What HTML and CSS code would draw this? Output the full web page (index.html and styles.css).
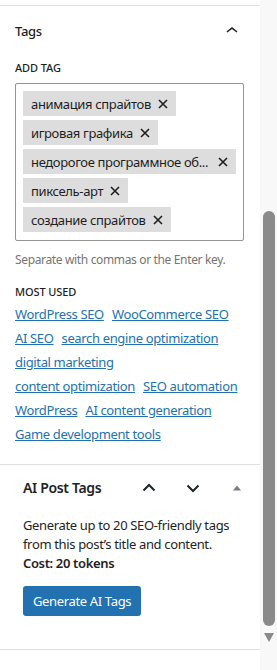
FILE: index.html
```html
<!DOCTYPE html>
<html lang="en">
<head>
    <meta charset="UTF-8">
    <meta name="viewport" content="width=device-width, initial-scale=1.0">
    <title>Tags</title>
    <link rel="stylesheet" href="styles.css">
</head>
<body>
    <div class="sidebar">
        <div class="sidebar-content">
            <div class="prev-panel"></div>

            <div class="panel tags-panel">
                <div class="panel-header">
                    <h2>Tags</h2>
                    <button class="icon-btn" aria-label="Collapse">
                        <svg width="24" height="24" viewBox="0 0 24 24"><path d="M6.5 12.4L12 8l5.5 4.4-.9 1.2L12 10l-4.6 3.6-1-1.2z"/></svg>
                    </button>
                </div>
                <div class="field-label">Add tag</div>
                <div class="token-field">
                    <span class="token"><span class="token-text">анимация спрайтов</span><svg class="token-remove" width="10" height="10" viewBox="0 0 10 10"><path d="M1 1l8 8M9 1l-8 8"/></svg></span>
                    <span class="token"><span class="token-text">игровая графика</span><svg class="token-remove" width="10" height="10" viewBox="0 0 10 10"><path d="M1 1l8 8M9 1l-8 8"/></svg></span>
                    <span class="token token-wide"><span class="token-text">недорогое программное об...</span><svg class="token-remove" width="10" height="10" viewBox="0 0 10 10"><path d="M1 1l8 8M9 1l-8 8"/></svg></span>
                    <span class="token"><span class="token-text">пиксель-арт</span><svg class="token-remove" width="10" height="10" viewBox="0 0 10 10"><path d="M1 1l8 8M9 1l-8 8"/></svg></span>
                    <span class="token"><span class="token-text">создание спрайтов</span><svg class="token-remove" width="10" height="10" viewBox="0 0 10 10"><path d="M1 1l8 8M9 1l-8 8"/></svg></span>
                </div>
                <p class="help">Separate with commas or the Enter key.</p>
                <div class="field-label most-used">Most used</div>
                <ul class="most-used-list">
                    <li><a href="#">WordPress SEO</a></li>
                    <li><a href="#">WooCommerce SEO</a></li>
                    <li><a href="#">AI SEO</a></li>
                    <li><a href="#">search engine optimization</a></li>
                    <li><a href="#">digital marketing</a></li>
                    <li><a href="#">content optimization</a></li>
                    <li><a href="#">SEO automation</a></li>
                    <li><a href="#">WordPress</a></li>
                    <li><a href="#">AI content generation</a></li>
                    <li><a href="#">Game development tools</a></li>
                </ul>
            </div>

            <div class="panel ai-panel">
                <div class="panel-header ai-header">
                    <h2>AI Post Tags</h2>
                    <div class="handle-actions">
                        <button class="icon-btn big" aria-label="Move up">
                            <svg width="20" height="20" viewBox="0 0 20 20"><path d="M4.5 12.5L10 7l5.5 5.5" fill="none" stroke="#1d2327" stroke-width="2"/></svg>
                        </button>
                        <button class="icon-btn big" aria-label="Move down">
                            <svg width="20" height="20" viewBox="0 0 20 20"><path d="M4.5 7.5L10 13l5.5-5.5" fill="none" stroke="#1d2327" stroke-width="2"/></svg>
                        </button>
                        <button class="icon-btn big" aria-label="Toggle panel">
                            <svg width="20" height="20" viewBox="0 0 20 20"><path d="M6 12.5l4-5 4 5z" fill="#787c82"/></svg>
                        </button>
                    </div>
                </div>
                <p class="ai-text">Generate up to 20 SEO-friendly tags from this post’s title and content.</p>
                <p class="ai-cost">Cost: 20 tokens</p>
                <button class="primary-btn">Generate AI Tags</button>
            </div>
        </div>

        <div class="scrollbar">
            <div class="scroll-track">
                <div class="scroll-thumb"></div>
            </div>
            <div class="scroll-arrow"></div>
            <div class="scroll-rest"></div>
        </div>
    </div>
</body>
</html>
```

FILE: styles.css
```css
* {
    margin: 0;
    padding: 0;
    box-sizing: border-box;
    font-family: 'Noto Sans', 'Open Sans', sans-serif;
    letter-spacing: -0.35px;
}

body {
    background: #fff;
    color: #1e1e1e;
    width: 277px;
    height: 670px;
    overflow: hidden;
}

.sidebar {
    display: flex;
    height: 670px;
}

.sidebar-content {
    width: 260px;
    flex-shrink: 0;
}

.prev-panel {
    height: 6px;
    border-bottom: 1px solid #e0e0e0;
}

.panel {
    border-bottom: 1px solid #e0e0e0;
}

.tags-panel {
    padding: 0 16px 18px 15px;
}

.panel-header {
    display: flex;
    align-items: center;
    justify-content: space-between;
    height: 50px;
}

.panel-header h2 {
    font-size: 13px;
    font-weight: 500;
    color: #1e1e1e;
}

.icon-btn {
    background: none;
    border: none;
    display: flex;
    align-items: center;
    justify-content: center;
    width: 24px;
    height: 24px;
    cursor: pointer;
    fill: #1e1e1e;
}

.field-label {
    font-size: 11px;
    font-weight: 500;
    text-transform: uppercase;
    line-height: 16px;
    margin-top: 4px;
    margin-bottom: 7px;
    letter-spacing: -0.1px;
}

.token-field {
    display: flex;
    flex-direction: column;
    align-items: flex-start;
    gap: 4px;
    border: 1px solid #949494;
    border-radius: 2px;
    padding: 7px;
    height: 158px;
}

.token {
    display: flex;
    align-items: center;
    background: #ddd;
    height: 25px;
    padding: 0 8px;
    font-size: 13px;
    color: #1e1e1e;
    white-space: nowrap;
}

.token-wide {
    align-self: stretch;
    justify-content: space-between;
}

.token-remove {
    margin-left: 7px;
    stroke: #1e1e1e;
    stroke-width: 1.6;
    fill: none;
}

.help {
    font-size: 12px;
    color: #757575;
    margin-top: 11px;
    line-height: 16px;
}

.most-used {
    margin-top: 16px;
    margin-bottom: 2px;
}

.most-used-list {
    list-style: none;
    display: flex;
    flex-wrap: wrap;
    column-gap: 8px;
    padding-right: 4px;
}

.most-used-list li {
    font-size: 13px;
    line-height: 24px;
}

.most-used-list a {
    color: #2271b1;
    text-decoration: underline;
}

.ai-panel {
    padding: 0 24px 33px 23px;
}

.ai-header {
    height: 45px;
}

.ai-header h2 {
    font-size: 14px;
    font-weight: 600;
    color: #1d2327;
}

.handle-actions {
    display: flex;
    gap: 8px;
    margin-right: -19px;
}

.icon-btn.big {
    width: 36px;
    height: 36px;
}

.ai-text {
    font-size: 13px;
    line-height: 19px;
    color: #1d2327;
    margin-top: 6px;
}

.ai-cost {
    font-size: 13px;
    line-height: 19px;
    font-weight: 600;
    color: #1d2327;
}

.primary-btn {
    margin-top: 13px;
    background: #2271b1;
    color: #fff;
    border: none;
    border-radius: 3px;
    height: 30px;
    padding: 0 10px;
    font-size: 13px;
    cursor: pointer;
}

.scrollbar {
    width: 17px;
    display: flex;
    flex-direction: column;
    background: #f8f8f8;
}

.scroll-track {
    height: 628px;
    padding: 211px 2px 0 3px;
}

.scroll-thumb {
    height: 415px;
    background: #8a8a8a;
    border-radius: 6px;
}

.scroll-arrow {
    align-self: center;
    width: 0;
    height: 0;
    border-left: 5px solid transparent;
    border-right: 5px solid transparent;
    border-top: 9px solid #8a8a8a;
    margin-top: 5px;
}

.scroll-rest {
    flex: 1;
}
```
